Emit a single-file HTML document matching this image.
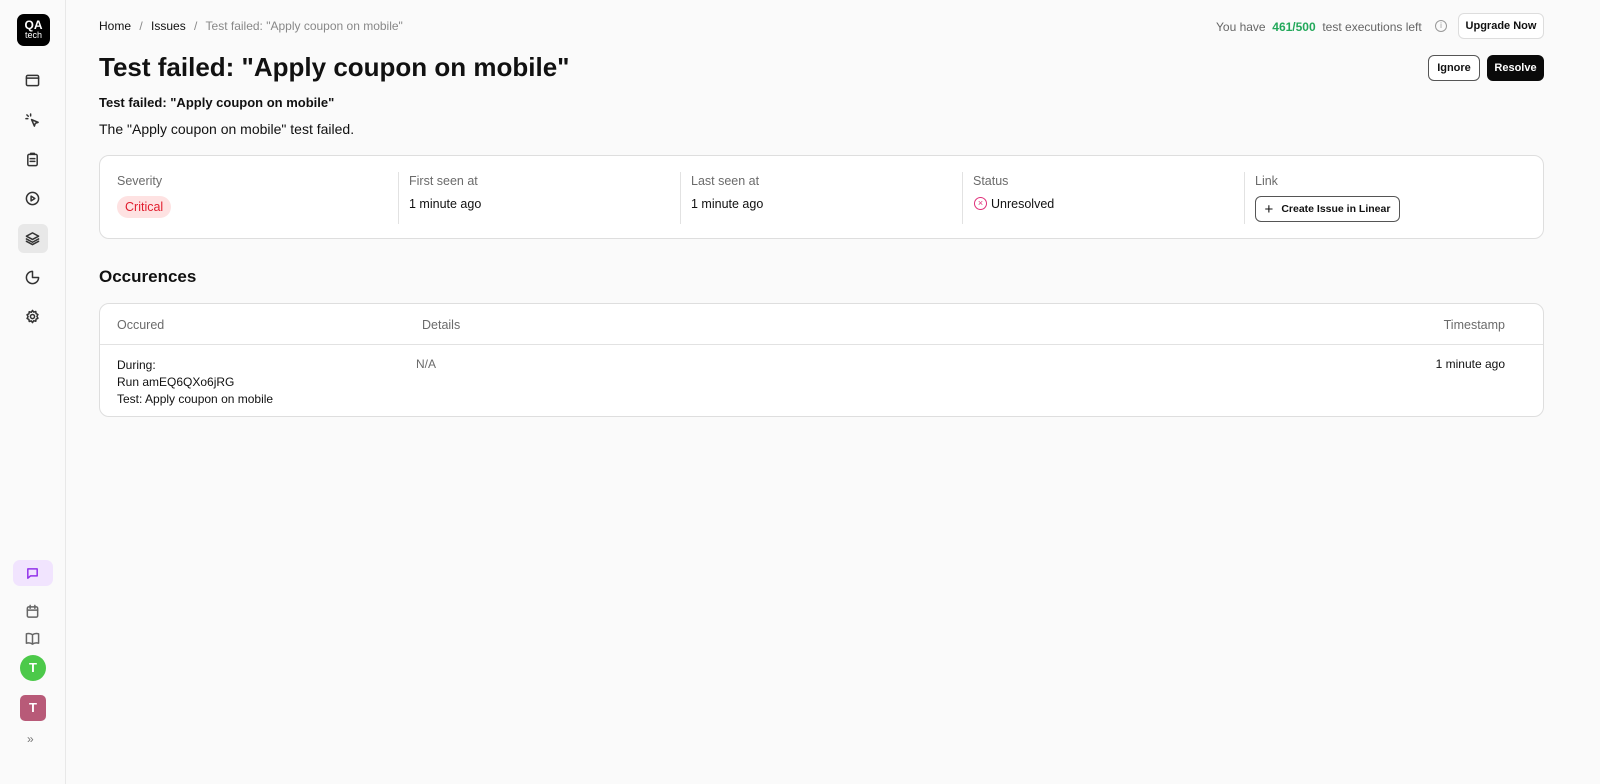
<!DOCTYPE html>
<html><head><meta charset="utf-8"><style>
*{box-sizing:border-box;margin:0;padding:0}
body{width:1600px;height:784px;background:#fafafa;font-family:"Liberation Sans",sans-serif;color:#111;position:relative;overflow:hidden}
.abs{position:absolute}
.side{position:absolute;left:0;top:0;width:66px;height:784px;border-right:1px solid #e8e8e8;background:#fafafa}
.ic{position:absolute;left:21px;width:22px;height:22px;display:flex;align-items:center;justify-content:center}
.ic svg{width:15px;height:15px;fill:none;stroke:#333;stroke-width:1.6;stroke-linecap:round;stroke-linejoin:round}
.card{position:absolute;left:99px;width:1445px;background:#fff;border:1px solid #dedede;border-radius:10px}
.col{position:absolute;top:16px;height:52px;border-left:1px solid #e2e2e2}
.lbl{font-size:12.5px;color:#6b6b6b;position:absolute}
.val{font-size:12.5px;color:#111;position:absolute}
.btn{position:absolute;border-radius:6px;font-size:11px;font-weight:bold;display:flex;align-items:center;justify-content:center}
</style></head><body>
<div class="side">
  <div class="abs" style="left:17px;top:14px;width:33px;height:32px;background:#000;border-radius:7px;color:#fff;text-align:center;font-weight:bold;font-size:12px;line-height:11px;padding-top:6px">QA<div style="font-weight:normal;font-size:9px;line-height:9px">tech</div></div>
  <div class="ic" style="top:69px"><svg viewBox="0 0 16 16"><rect x="1.5" y="2.5" width="13" height="11" rx="1.5"/><path d="M1.5 5.5h13"/></svg></div>
  <div class="ic" style="top:109px"><svg viewBox="0 0 16 16"><path d="M7 7l7 3-3 1-1 3z M2 2l1.5 1.5 M6 1v2 M1 6h2"/></svg></div>
  <div class="ic" style="top:148px"><svg viewBox="0 0 16 16"><rect x="3" y="2.5" width="10" height="12" rx="1.5"/><path d="M6 2.5V1.5h4v1 M5.5 7h5 M5.5 10h5"/></svg></div>
  <div class="ic" style="top:187px"><svg viewBox="0 0 16 16"><circle cx="8" cy="8" r="6.5"/><path d="M6.5 5.5l4 2.5-4 2.5z"/></svg></div>
  <div class="abs" style="left:18px;top:224px;width:30px;height:29px;background:#e8e8e8;border-radius:6px"></div>
  <div class="ic" style="top:227px"><svg viewBox="0 0 16 16"><path d="M8 2l6.5 3.5L8 9 1.5 5.5z M1.5 8.5L8 12l6.5-3.5 M1.5 11L8 14.5 14.5 11"/></svg></div>
  <div class="ic" style="top:266px"><svg viewBox="0 0 16 16"><path d="M8 1.5v6.5h6.5 A6.5 6.5 0 1 1 8 1.5z" /></svg></div>
  <div class="ic" style="top:305px"><svg viewBox="0 0 16 16"><circle cx="8" cy="8" r="2.2"/><path d="M8 1.5l1.3 1.8 2.2-.6.3 2.2 2 1-1.1 2 1.1 2-2 1-.3 2.2-2.2-.6L8 14.5l-1.3-1.8-2.2.6-.3-2.2-2-1 1.1-2-1.1-2 2-1 .3-2.2 2.2.6z"/></svg></div>
  <div class="abs" style="left:13px;top:560px;width:40px;height:26px;background:#f1e4fe;border-radius:7px"></div>
  <div class="ic" style="top:562px"><svg viewBox="0 0 16 16" style="stroke:#9333ea"><path d="M3 3h10v7.5H6L3 13z"/></svg></div>
  <div class="ic" style="top:600px"><svg viewBox="0 0 16 16" style="stroke:#666"><rect x="2.5" y="3" width="11" height="11" rx="1.5"/><path d="M2.5 6.5h11 M5.5 1.5v3 M10.5 1.5v3"/></svg></div>
  <div class="ic" style="top:627px"><svg viewBox="0 0 16 16" style="stroke:#666"><path d="M8 4v10 M8 4C6 2.5 3.5 2.5 1.5 3v10c2-.5 4.5-.5 6.5 1 2-1.5 4.5-1.5 6.5-1V3C12.5 2.5 10 2.5 8 4z"/></svg></div>
  <div class="abs" style="left:20px;top:655px;width:26px;height:26px;border-radius:50%;background:#4cc94a;color:#fff;font-weight:bold;font-size:13px;text-align:center;line-height:26px">T</div>
  <div class="abs" style="left:20px;top:695px;width:26px;height:26px;border-radius:5px;background:#b85a78;color:#fff;font-weight:bold;font-size:13px;text-align:center;line-height:26px">T</div>
  <div class="abs" style="left:27px;top:732px;font-size:12px;color:#777">»</div>
</div>

<div class="abs" style="left:99px;top:19px;font-size:12px;color:#111">Home <span style="color:#888;margin:0 5px">/</span> Issues <span style="color:#888;margin:0 5px">/</span> <span style="color:#888">Test failed: "Apply coupon on mobile"</span></div>
<div class="abs" style="left:1216px;top:20px;font-size:12px;color:#666">You have &nbsp;<b style="color:#22a85a">461/500</b>&nbsp; test executions left</div>
<div class="abs" style="left:1435px;top:20px;width:12px;height:12px;border:1px solid #999;border-radius:50%;font-size:8px;color:#999;text-align:center;line-height:10px">i</div>
<div class="btn" style="left:1458px;top:13px;width:86px;height:26px;border:1px solid #ddd;background:#fff">Upgrade Now</div>
<div class="btn" style="left:1428px;top:55px;width:52px;height:26px;border:1px solid #555;background:#fff">Ignore</div>
<div class="btn" style="left:1487px;top:55px;width:57px;height:26px;background:#0a0a0a;color:#fff">Resolve</div>

<div class="abs" style="left:99px;top:52px;font-size:26px;font-weight:bold">Test failed: "Apply coupon on mobile"</div>
<div class="abs" style="left:99px;top:95px;font-size:13px;font-weight:bold">Test failed: "Apply coupon on mobile"</div>
<div class="abs" style="left:99px;top:121px;font-size:14px">The "Apply coupon on mobile" test failed.</div>

<div class="card" style="top:155px;height:84px">
  <div class="lbl" style="left:17px;top:18px">Severity</div>
  <div class="abs" style="left:17px;top:40px;height:22px;padding:0 8px;background:#fee2e2;color:#e11d2e;border-radius:11px;font-size:12.5px;line-height:22px">Critical</div>
  <div class="col" style="left:298px"></div>
  <div class="lbl" style="left:309px;top:18px">First seen at</div>
  <div class="val" style="left:309px;top:41px">1 minute ago</div>
  <div class="col" style="left:580px"></div>
  <div class="lbl" style="left:591px;top:18px">Last seen at</div>
  <div class="val" style="left:591px;top:41px">1 minute ago</div>
  <div class="col" style="left:862px"></div>
  <div class="lbl" style="left:873px;top:18px">Status</div>
  <div class="abs" style="left:874px;top:41px;width:13px;height:13px;border:1.4px solid #e0307a;border-radius:50%;color:#e0307a;font-size:9px;line-height:10px;text-align:center">×</div>
  <div class="val" style="left:891px;top:41px">Unresolved</div>
  <div class="col" style="left:1144px"></div>
  <div class="lbl" style="left:1155px;top:18px">Link</div>
  <div class="btn" style="left:1155px;top:40px;width:145px;height:26px;border:1px solid #555;background:#fff;font-size:10.5px"><span style="font-weight:normal;font-size:15px;margin-right:8px">+</span>Create Issue in Linear</div>
</div>

<div class="abs" style="left:99px;top:267px;font-size:17px;font-weight:bold">Occurences</div>
<div class="card" style="top:303px;height:114px">
  <div class="lbl" style="left:17px;top:14px">Occured</div>
  <div class="lbl" style="left:322px;top:14px">Details</div>
  <div class="lbl" style="right:38px;top:14px">Timestamp</div>
  <div class="abs" style="left:0;right:0;top:40px;border-top:1px solid #e2e2e2"></div>
  <div class="val" style="left:17px;top:53px;font-size:12px;line-height:17px">During:<br>Run amEQ6QXo6jRG<br>Test: Apply coupon on mobile</div>
  <div class="lbl" style="left:316px;top:53px;font-size:12px">N/A</div>
  <div class="val" style="right:38px;top:53px;font-size:12px">1 minute ago</div>
</div>
</body></html>
